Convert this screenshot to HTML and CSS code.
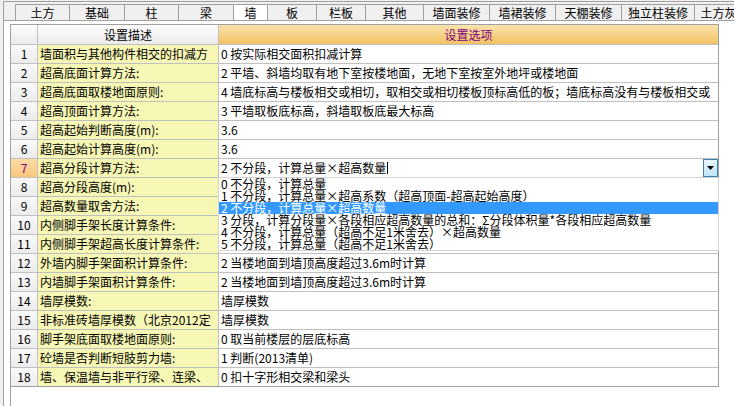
FILE: index.html
```html
<!DOCTYPE html>
<html lang="zh-CN">
<head>
<meta charset="utf-8">
<title>墙 设置</title>
<link rel="stylesheet" href="styles.css">
</head>
<body>
<div class="app">
  <div class="frame">
    <div class="tabstrip">
      <div class="tab">土方</div>
      <div class="tab">基础</div>
      <div class="tab">柱</div>
      <div class="tab">梁</div>
      <div class="tab active">墙</div>
      <div class="tab">板</div>
      <div class="tab">栏板</div>
      <div class="tab">其他</div>
      <div class="tab">墙面装修</div>
      <div class="tab">墙裙装修</div>
      <div class="tab">天棚装修</div>
      <div class="tab">独立柱装修</div>
      <div class="tab">土方灰土</div>
    </div>
    <div class="content">
      <div class="panel">
        <div class="grid">
          <div class="hnum"></div>
          <div class="hdesc">设置描述</div>
          <div class="hval">设置选项</div>

          <div class="num">1</div><div class="desc">墙面积与其他构件相交的扣减方</div><div class="val">0 按实际相交面积扣减计算</div>
          <div class="num">2</div><div class="desc">超高底面计算方法:</div><div class="val">2 平墙、斜墙均取有地下室按楼地面，无地下室按室外地坪或楼地面</div>
          <div class="num">3</div><div class="desc">超高底面取楼地面原则:</div><div class="val">4 墙底标高与楼板相交或相切，取相交或相切楼板顶标高低的板；墙底标高没有与楼板相交或</div>
          <div class="num">4</div><div class="desc">超高顶面计算方法:</div><div class="val">3 平墙取板底标高，斜墙取板底最大标高</div>
          <div class="num">5</div><div class="desc">超高起始判断高度(m):</div><div class="val">3.6</div>
          <div class="num">6</div><div class="desc">超高起始计算高度(m):</div><div class="val">3.6</div>
          <div class="num cur">7</div><div class="desc">超高分段计算方法:</div>
          <div class="val editing"><span class="edittext">2 不分段，计算总量×超高数量</span><span class="caret"></span><span class="dropbtn"><svg width="7" height="4" viewBox="0 0 7 4"><path d="M0 0H7L3.5 4Z" fill="#000"/></svg></span><div class="droplist"><div class="item">0 不分段，计算总量</div><div class="item">1 不分段，计算总量×超高系数（超高顶面-超高起始高度）</div><div class="item sel">2 不分段，计算总量×超高数量</div><div class="item">3 分段，计算分段量×各段相应超高数量的总和：Σ分段体积量*各段相应超高数量</div><div class="item">4 不分段，计算总量（超高不足1米舍去）×超高数量</div><div class="item">5 不分段，计算总量（超高不足1米舍去）</div></div></div>
          <div class="num">8</div><div class="desc">超高分段高度(m):</div><div class="val"></div>
          <div class="num">9</div><div class="desc">超高数量取舍方法:</div><div class="val"></div>
          <div class="num">10</div><div class="desc">内侧脚手架长度计算条件:</div><div class="val"></div>
          <div class="num">11</div><div class="desc">内侧脚手架超高长度计算条件:</div><div class="val"></div>
          <div class="num">12</div><div class="desc">外墙内脚手架面积计算条件:</div><div class="val">2 当楼地面到墙顶高度超过3.6m时计算</div>
          <div class="num">13</div><div class="desc">内墙脚手架面积计算条件:</div><div class="val">2 当楼地面到墙顶高度超过3.6m时计算</div>
          <div class="num">14</div><div class="desc">墙厚模数:</div><div class="val">墙厚模数</div>
          <div class="num">15</div><div class="desc">非标准砖墙厚模数（北京2012定</div><div class="val">墙厚模数</div>
          <div class="num">16</div><div class="desc">脚手架底面取楼地面原则:</div><div class="val">0 取当前楼层的层底标高</div>
          <div class="num">17</div><div class="desc">砼墙是否判断短肢剪力墙:</div><div class="val">1 判断(2013清单)</div>
          <div class="num">18</div><div class="desc">墙、保温墙与非平行梁、连梁、</div><div class="val">0 扣十字形相交梁和梁头</div>
        </div>
      </div>
    </div>
  </div>
</div>
</body>
</html>
```

FILE: styles.css
```css
* { box-sizing: border-box; }
html, body { margin: 0; padding: 0; }
body {
  width: 734px;
  height: 406px;
  overflow: hidden;
  background: #f0f0f0;
  font-family: "Noto Sans CJK SC", "Liberation Sans", sans-serif;
  font-size: 12px;
  color: #000;
}
.app {
  height: 406px;
  padding: 1px 0 0 3px;
}
.frame {
  height: 405px;
  border-top: 1px solid #a0a0a0;
  border-left: 1px solid #a0a0a0;
  background: #fff;
  display: flex;
  flex-direction: column;
}
.tabstrip {
  background: #f0f0f0;
  padding: 2px 0 0 11px;
  border-bottom: 1px solid #a0a0a0;
  display: grid;
  grid-template-columns: 54px 55px 54px 55px 34px 49px 49px 58px 66px 66px 66px 73px 60px;
  height: 19px;
  overflow: hidden;
  white-space: nowrap;
}
.tab {
  height: 16px;
  border-top: 1px solid #a0a0a0;
  border-left: 1px solid #a0a0a0;
  text-align: center;
  line-height: 15px;
  background: #f0f0f0;
  overflow: hidden;
}
.tab.active {
  background: #fff;
}
.content {
  flex: 1;
  padding: 3px 0 0 6px;
  display: flex;
}
.panel {
  flex: 1;
  border-left: 1px solid #a0a0a0;
}
.grid {
  width: 708px;
  display: grid;
  grid-template-columns: 26px 180px 499px;
  grid-template-rows: 19px repeat(18, 18px);
  gap: 1px;
  background: #c0c0c0;
  border-top: 1px solid #a0a0a0;
  border-right: 1px solid #a0a0a0;
  border-bottom: 1px solid #a0a0a0;
}
.grid > div {
  line-height: 18px;
  white-space: nowrap;
  overflow: hidden;
}
.hnum, .hdesc {
  background: linear-gradient(#fdfdfd, #ebebeb);
  text-align: center;
  line-height: 19px !important;
}
.hval {
  background: linear-gradient(#fbe3ad, #f2c264);
  text-align: center;
  color: #800080;
  line-height: 19px !important;
}
.num {
  background: linear-gradient(#f9f9f9, #ececec);
  text-align: center;
}
.num.cur {
  background: linear-gradient(#fcdca4, #f8c77f);
  color: #800080;
}
.desc {
  background: #f7f7b5;
  padding-left: 2px;
}
.val {
  background: #fff;
  padding-left: 2px;
}
.grid > .editing {
  position: relative;
  overflow: visible;
  display: flex;
  align-items: center;
}
.caret {
  display: inline-block;
  width: 1px;
  height: 12px;
  background: #000;
  margin-left: 1px;
}
.dropbtn {
  position: absolute;
  right: 0;
  top: 0;
  width: 15px;
  height: 18px;
  border: 1px solid #3c7fb1;
  background: linear-gradient(#eaf6fd, #bee6fd);
  display: flex;
  align-items: center;
  justify-content: center;
}
.droplist {
  position: absolute;
  left: -1px;
  top: 18px;
  width: 501px;
  height: 74px;
  background: #fff;
  border: 1px solid #d4d4d4;
  z-index: 5;
  line-height: 12px;
}
.item {
  height: 12px;
  line-height: 12px;
  padding-left: 2px;
  white-space: nowrap;
  overflow: hidden;
}
.item.sel {
  background: #3399ff;
  color: #fff;
}
```
